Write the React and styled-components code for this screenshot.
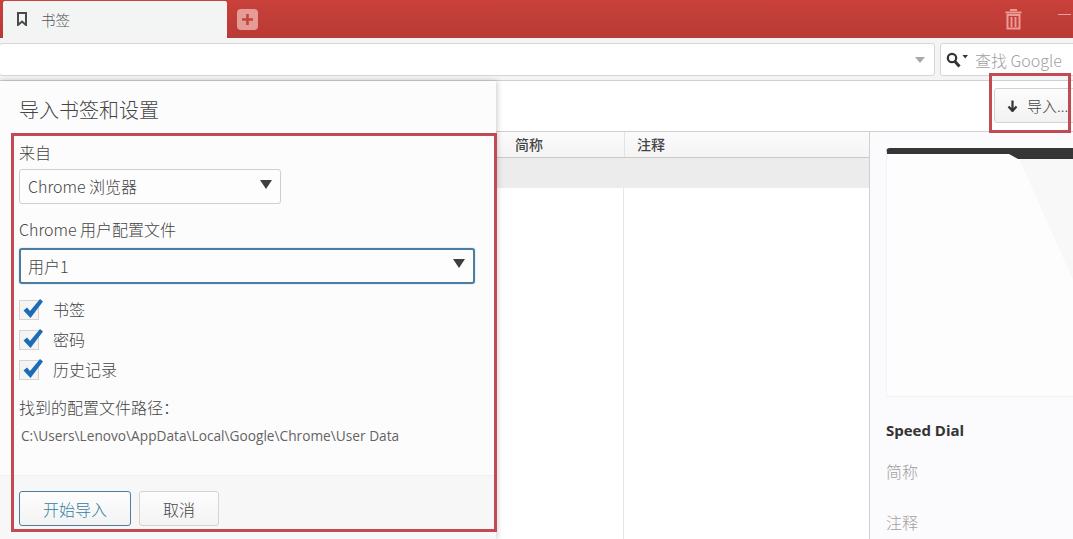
import React from "react";
import styled, { createGlobalStyle } from "styled-components";

const GlobalStyle = createGlobalStyle`
  html, body {
    margin: 0;
    padding: 0;
    background: #ffffff;
  }
  body {
    font-family: "Noto Sans CJK SC", "Open Sans", sans-serif;
    color: #444444;
  }
  * {
    box-sizing: border-box;
  }
`;

const Page = styled.div`
  position: relative;
  width: 1073px;
  height: 539px;
  overflow: hidden;
  display: flex;
  flex-direction: column;
  background: #ffffff;
`;

const TabBar = styled.div`
  height: 38px;
  flex: none;
  display: flex;
  align-items: flex-start;
  padding-left: 3px;
  background: linear-gradient(#c9413a, #b93a36);
`;

const Tab = styled.div`
  width: 224px;
  height: 38px;
  margin-top: 1px;
  display: flex;
  align-items: center;
  padding: 0 0 2px 14px;
  gap: 14px;
  background: #f3f4f4;
  border-radius: 2px 2px 0 0;
  font-size: 14.5px;
  font-weight: 300;
  color: #555555;
`;

const AddButton = styled.div`
  width: 21px;
  height: 21px;
  margin: 9px 0 0 10px;
  display: flex;
  align-items: center;
  justify-content: center;
  background: #e59b96;
  border-radius: 4px;
`;

const TrashButton = styled.div`
  margin: 9px 0 0 auto;
  height: 21px;
  display: flex;
`;

const MinimizeMark = styled.div`
  width: 13px;
  height: 1px;
  margin: 14px 2px 0 36px;
  background: #e9a19c;
`;

const AddressBar = styled.div`
  height: 43px;
  flex: none;
  display: flex;
  gap: 5px;
  padding: 5px 0 5px 0;
  background: #f4f4f4;
  border-bottom: 1px solid #d0d0d0;
`;

const UrlField = styled.div`
  width: 936px;
  height: 33px;
  margin-left: -1px;
  display: flex;
  align-items: center;
  justify-content: flex-end;
  padding-right: 9px;
  background: #ffffff;
  border: 1px solid #d6d6d6;
  border-radius: 3px;
`;

const UrlCaret = styled.div`
  width: 0;
  height: 0;
  border-left: 5.5px solid transparent;
  border-right: 5.5px solid transparent;
  border-top: 6px solid #a8a8a8;
`;

const SearchField = styled.div`
  flex: 1;
  height: 33px;
  margin-right: -6px;
  display: flex;
  align-items: center;
  gap: 6px;
  padding-left: 5px;
  background: #ffffff;
  border: 1px solid #d6d6d6;
  border-radius: 3px;
  font-size: 16px;
  font-weight: 300;
  color: #a0a0a0;
  white-space: nowrap;
  overflow: hidden;
`;

const Toolbar = styled.div`
  height: 51px;
  flex: none;
  display: flex;
  justify-content: flex-end;
  padding-top: 7px;
  background: #ffffff;
  border-bottom: 1px solid #cfcfcf;
`;

const ImportButton = styled.div`
  width: 85px;
  height: 35px;
  margin-right: -6px;
  display: flex;
  align-items: center;
  gap: 9px;
  padding-left: 12px;
  background: linear-gradient(#fcfcfc, #f2f2f3);
  border: 1px solid #d2d2d2;
  border-radius: 3px;
  font-size: 15px;
  font-weight: 300;
  color: #444444;
  white-space: nowrap;
`;

const Main = styled.div`
  flex: 1;
  display: flex;
  min-height: 0;
`;

const Table = styled.div`
  width: 870px;
  flex: none;
  display: flex;
  flex-direction: column;
  background: #ffffff;
  border-right: 1px solid #cfcfcf;
`;

const HeaderRow = styled.div`
  height: 26px;
  flex: none;
  display: grid;
  grid-template-columns: 625px 1fr;
  background: linear-gradient(#fbfbfb, #f4f4f4);
  border-bottom: 1px solid #c9c9c9;
`;

const HeaderCell = styled.div`
  display: flex;
  align-items: center;
  justify-content: ${(props) => (props.$end ? "flex-end" : "flex-start")};
  padding: ${(props) => (props.$end ? "0 81px 1px 0" : "0 0 1px 12px")};
  font-size: 14px;
  font-weight: 500;
  color: #444444;
  ${(props) => (props.$end ? "border-right: 1px solid #e2e2e2;" : "")}
`;

const SelectedRow = styled.div`
  height: 30px;
  flex: none;
  background: #ececec;
`;

const TableBody = styled.div`
  flex: 1;
  display: grid;
  grid-template-columns: 624px 1fr;
`;

const BodyColumn = styled.div`
  border-right: ${(props) => (props.$divider ? "1px solid #e6e6e6" : "none")};
`;

const SidePanel = styled.div`
  flex: 1;
  min-width: 0;
  display: flex;
  flex-direction: column;
  padding: 16px 0 0 16px;
  background: #fbfafc;
`;

const PreviewCard = styled.div`
  position: relative;
  height: 249px;
  margin-right: -20px;
  flex: none;
  background: #fdfdfd;
  border: 1px solid #f3f2f4;
  border-top: 6px solid #363636;
  border-radius: 4px 0 0 0;
  overflow: hidden;
`;

const PreviewShade = styled.div`
  position: absolute;
  top: 0;
  left: 130px;
  width: 56px;
  height: 126px;
  background: #f8f8f8;
  clip-path: polygon(0 0, 100% 0, 100% 100%);
`;

const PreviewNotch = styled.div`
  position: absolute;
  top: 0;
  left: 122px;
  width: 90px;
  height: 5px;
  background: #363636;
  clip-path: polygon(0 0, 100% 0, 100% 100%, 9px 100%);
`;

const SideTitle = styled.div`
  margin-top: 23px;
  font-family: "Open Sans", sans-serif;
  font-size: 15px;
  line-height: 20px;
  font-weight: 700;
  color: #333333;
`;

const SideField = styled.div`
  margin-top: ${(props) => props.$gap}px;
  font-size: 16px;
  font-weight: 300;
  line-height: 22px;
  color: #a0a0a0;
`;

const Dialog = styled.div`
  position: absolute;
  left: 0;
  top: 81px;
  bottom: 0;
  width: 496px;
  display: flex;
  flex-direction: column;
  background: #fcfcfd;
  box-shadow: 1px 0 6px rgba(0, 0, 0, 0.22);
`;

const DialogTitle = styled.div`
  height: 52px;
  flex: none;
  padding: 15px 0 0 19px;
  font-size: 20px;
  font-weight: 300;
  line-height: 27px;
  color: #444444;
`;

const DialogBody = styled.div`
  flex: 1;
  display: flex;
  flex-direction: column;
  padding: 8px 19px 0;
`;

const FieldLabel = styled.div`
  font-size: 16px;
  font-weight: 300;
  line-height: 22px;
  color: #444444;
`;

const SelectBox = styled.div`
  width: ${(props) => props.$width}px;
  height: ${(props) => (props.$focused ? 36 : 35)}px;
  margin: ${(props) => (props.$focused ? "8px 0 16px" : "6px 0 14px")};
  display: flex;
  align-items: center;
  justify-content: space-between;
  padding: 0 8px 1px ${(props) => (props.$focused ? 7 : 8)}px;
  background: #fdfdfd;
  border: ${(props) => (props.$focused ? "2px solid #4d7c9f" : "1px solid #cfcfcf")};
  box-shadow: ${(props) => (props.$focused ? "0 0 2px #a6d4ec" : "none")};
  border-radius: 3px;
  font-size: 16px;
  font-weight: 300;
  color: #444444;
`;

const SelectCaret = styled.div`
  width: 0;
  height: 0;
  margin-bottom: 4px;
  border-left: 6px solid transparent;
  border-right: 6px solid transparent;
  border-top: 9px solid #3f3f3f;
`;

const CheckList = styled.div`
  display: flex;
  flex-direction: column;
  gap: 10px;
`;

const CheckRow = styled.div`
  height: 20px;
  display: flex;
  align-items: center;
  gap: 14px;
  font-size: 16px;
  font-weight: 300;
  color: #444444;
`;

const CheckLabel = styled.span`
  margin-top: -3px;
  line-height: 18px;
`;

const CheckBox = styled.div`
  position: relative;
  width: 20px;
  height: 20px;
  background: #f4f4f4;
  border: 1px solid #d4d4d4;
`;

const CheckMark = styled.svg`
  position: absolute;
  left: 1px;
  top: -5px;
`;

const PathLabel = styled(FieldLabel)`
  margin-top: 16px;
`;

const PathValue = styled.div`
  margin: 9px 0 0 2px;
  font-family: "Open Sans", sans-serif;
  font-size: 13.7px;
  line-height: 18px;
  color: #636363;
  white-space: nowrap;
`;

const DialogFooter = styled.div`
  height: 64px;
  flex: none;
  display: flex;
  gap: 8px;
  padding: 15px 0 0 19px;
  background: #f7f7f7;
  border-top: 1px solid #f0f0f0;
`;

const FooterButton = styled.div`
  width: ${(props) => props.$width}px;
  height: 35px;
  display: flex;
  align-items: center;
  justify-content: center;
  border-radius: 3px;
  font-size: 16px;
  font-weight: 300;
  color: ${(props) => (props.$primary ? "#2f7f9f" : "#444444")};
  background: linear-gradient(#fdfdfd, #f3f3f4);
  border: 1px solid ${(props) => (props.$primary ? "#4d7c9f" : "#d4d4d4")};
`;

const Highlight = styled.div`
  position: absolute;
  left: ${(props) => props.$left}px;
  top: ${(props) => props.$top}px;
  width: ${(props) => props.$width}px;
  height: ${(props) => props.$height}px;
  border: 3px solid #c24a52;
  pointer-events: none;
`;

function Check() {
  return (
    <CheckBox>
      <CheckMark width="24" height="24" viewBox="0 0 24 24">
        <path d="M2.5 14.5 L6 11.5 L9 15 L19 3 L22 5.5 L9.5 22 Z" fill="#1b6cb5" />
      </CheckMark>
    </CheckBox>
  );
}

function App() {
  return (
    <Page>
      <GlobalStyle />
      <TabBar>
        <Tab>
          <svg width="10" height="14" viewBox="0 0 10 14">
            <path d="M1 1 H9 V13 L5 9.5 L1 13 Z" fill="none" stroke="#4a4a4a" strokeWidth="2" />
          </svg>
          书签
        </Tab>
        <AddButton>
          <svg width="13" height="13" viewBox="0 0 13 13">
            <path d="M6.5 1 V12 M1 6.5 H12" stroke="#c4453f" strokeWidth="2.6" />
          </svg>
        </AddButton>
        <TrashButton>
          <svg width="17" height="21" viewBox="0 0 17 21">
            <path d="M6 2 V1 H11 V2 M0.5 3.5 H16.5" fill="none" stroke="#ee9a94" strokeWidth="2" />
            <path d="M2.5 6 H14.5 V19.5 H2.5 Z M6.5 8 V18 M10.5 8 V18" fill="none" stroke="#ee9a94" strokeWidth="2" />
          </svg>
        </TrashButton>
        <MinimizeMark />
      </TabBar>
      <AddressBar>
        <UrlField>
          <UrlCaret />
        </UrlField>
        <SearchField>
          <svg width="23" height="16" viewBox="0 0 23 16">
            <circle cx="6" cy="6" r="4.2" fill="none" stroke="#333333" strokeWidth="2.2" />
            <path d="M9 9.5 L13.5 14.5" stroke="#333333" strokeWidth="3" />
            <path d="M16.5 3 H22 L19.2 6.5 Z" fill="#333333" />
          </svg>
          查找 Google
        </SearchField>
      </AddressBar>
      <Toolbar>
        <ImportButton>
          <svg width="11" height="12" viewBox="0 0 11 12">
            <path d="M5.5 0.5 V10 M1.5 6.5 L5.5 11 L9.5 6.5" fill="none" stroke="#333333" strokeWidth="2.2" />
          </svg>
          导入...
        </ImportButton>
      </Toolbar>
      <Main>
        <Table>
          <HeaderRow>
            <HeaderCell $end>简称</HeaderCell>
            <HeaderCell>注释</HeaderCell>
          </HeaderRow>
          <SelectedRow />
          <TableBody>
            <BodyColumn $divider />
            <BodyColumn />
          </TableBody>
        </Table>
        <SidePanel>
          <PreviewCard>
            <PreviewShade />
            <PreviewNotch />
          </PreviewCard>
          <SideTitle>Speed Dial</SideTitle>
          <SideField $gap={20}>简称</SideField>
          <SideField $gap={29}>注释</SideField>
        </SidePanel>
      </Main>
      <Dialog>
        <DialogTitle>导入书签和设置</DialogTitle>
        <DialogBody>
          <FieldLabel>来自</FieldLabel>
          <SelectBox $width={262}>
            Chrome 浏览器
            <SelectCaret />
          </SelectBox>
          <FieldLabel>Chrome 用户配置文件</FieldLabel>
          <SelectBox $width={456} $focused>
            用户1
            <SelectCaret />
          </SelectBox>
          <CheckList>
            <CheckRow>
              <Check />
              <CheckLabel>书签</CheckLabel>
            </CheckRow>
            <CheckRow>
              <Check />
              <CheckLabel>密码</CheckLabel>
            </CheckRow>
            <CheckRow>
              <Check />
              <CheckLabel>历史记录</CheckLabel>
            </CheckRow>
          </CheckList>
          <PathLabel>找到的配置文件路径：</PathLabel>
          <PathValue>C:\Users\Lenovo\AppData\Local\Google\Chrome\User Data</PathValue>
        </DialogBody>
        <DialogFooter>
          <FooterButton $width={112} $primary>
            开始导入
          </FooterButton>
          <FooterButton $width={80}>取消</FooterButton>
        </DialogFooter>
      </Dialog>
      <Highlight $left={11} $top={133} $width={486} $height={399} />
      <Highlight $left={989} $top={73} $width={82} $height={60} />
    </Page>
  );
}

export default App;
